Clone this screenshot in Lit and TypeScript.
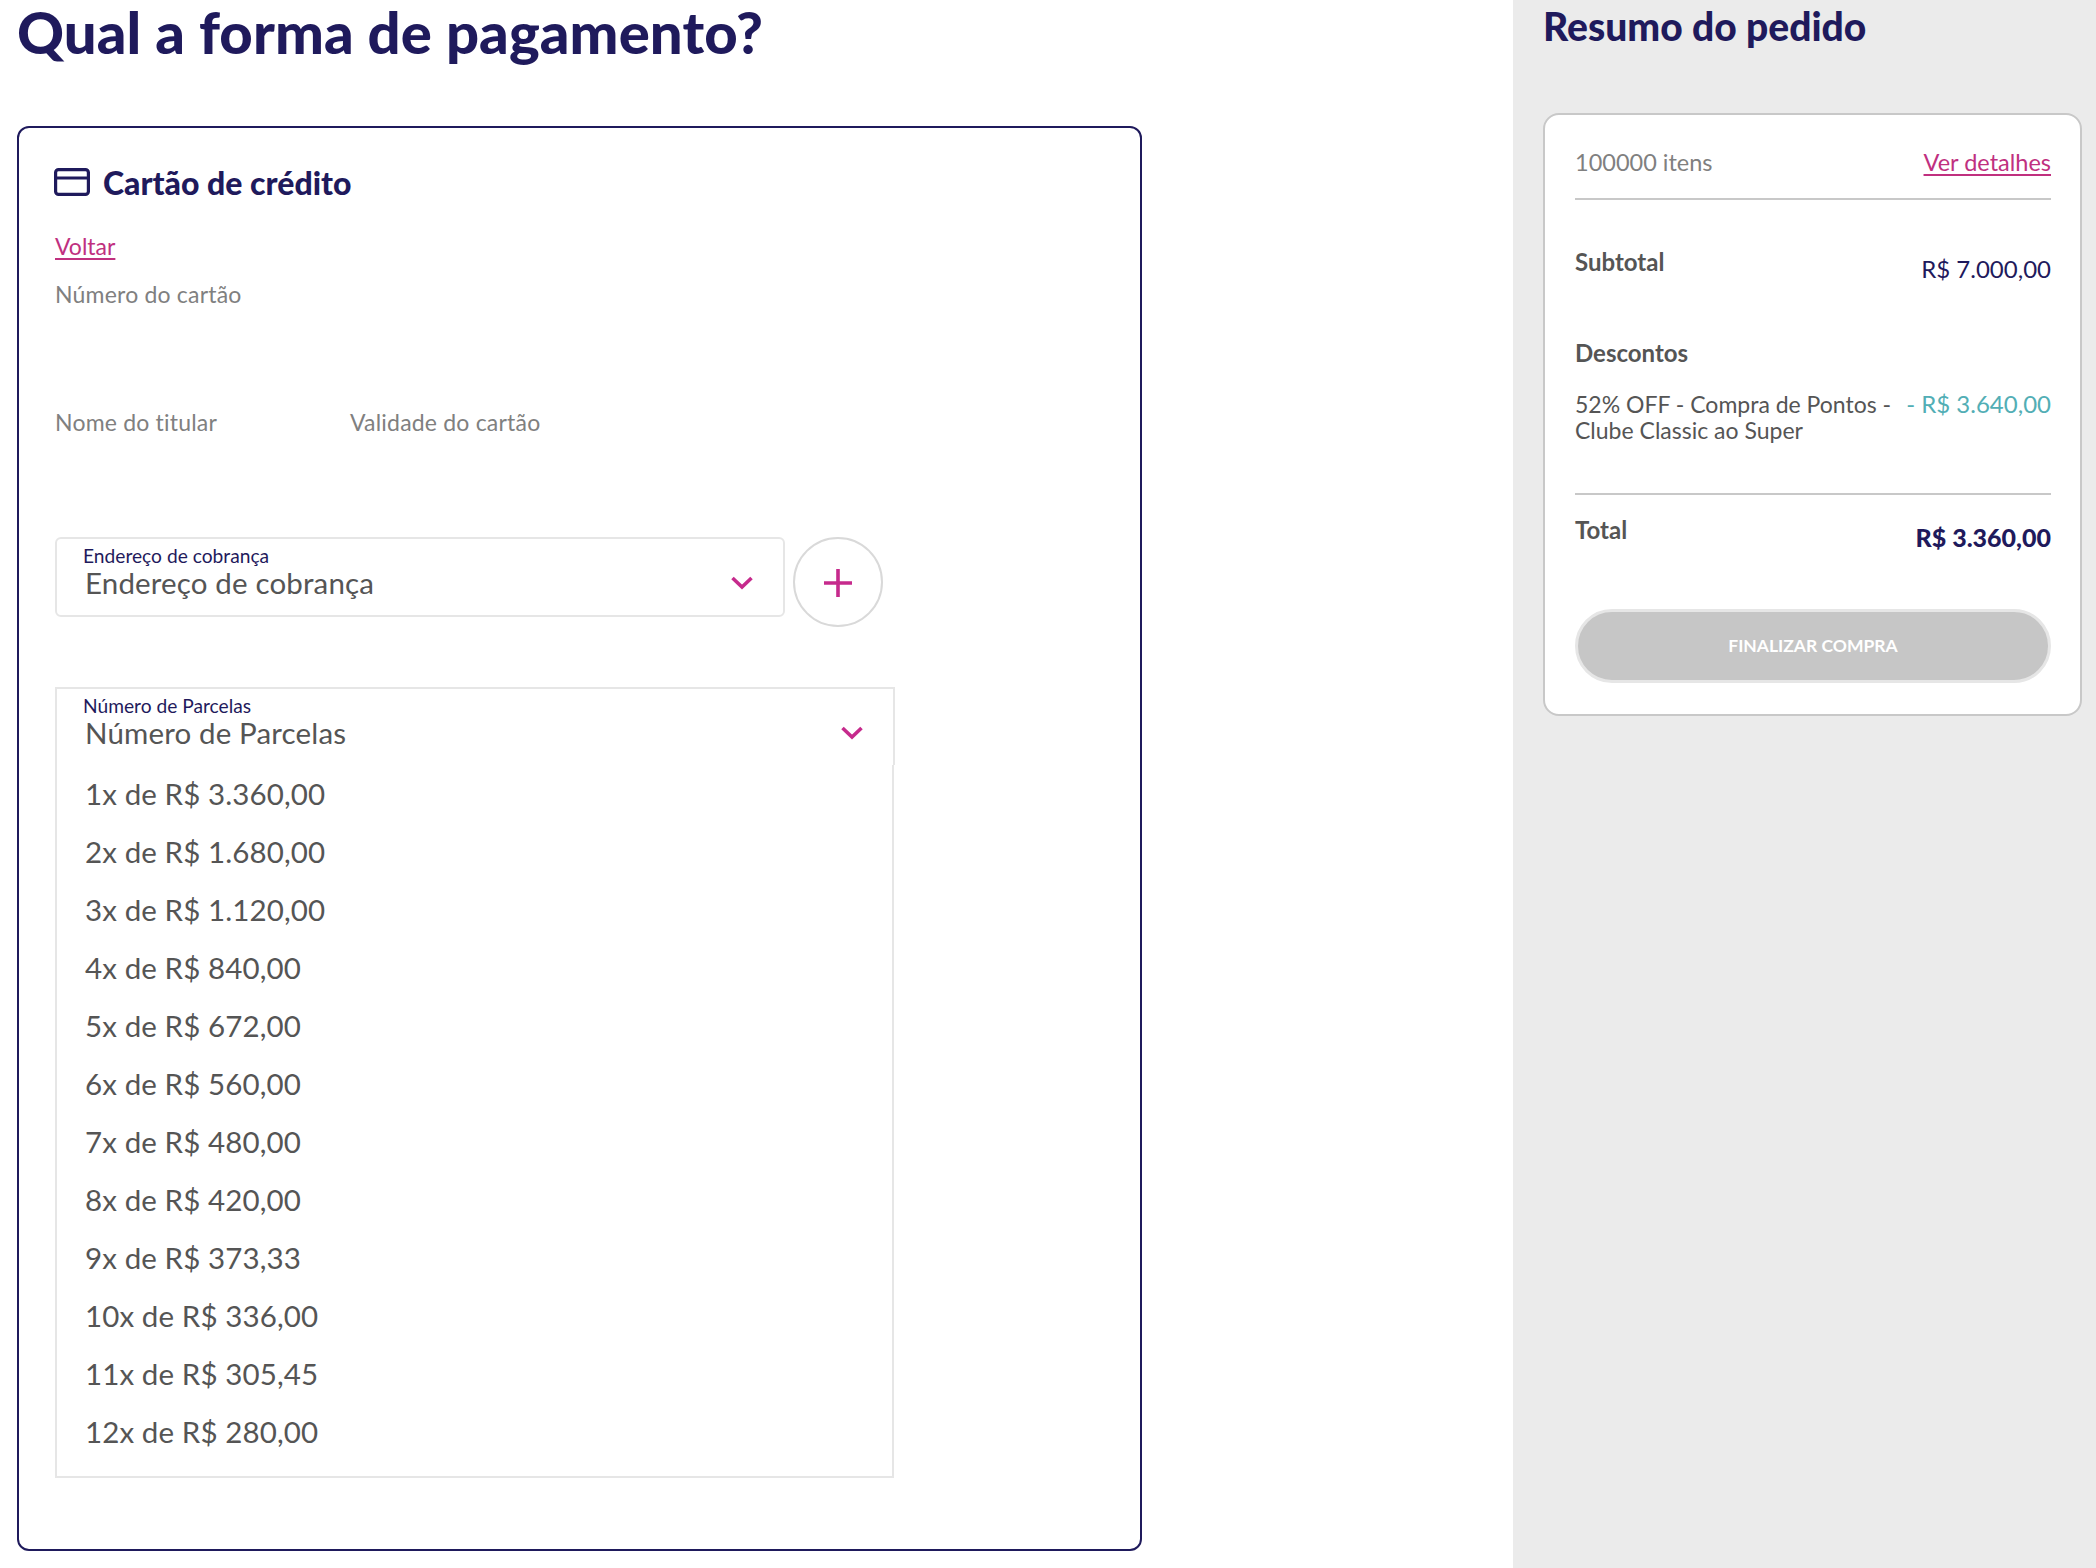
import { html, css, LitElement } from "lit";
import { customElement } from "lit/decorators.js";

const PARCELAS = [
  "1x de R$ 3.360,00",
  "2x de R$ 1.680,00",
  "3x de R$ 1.120,00",
  "4x de R$ 840,00",
  "5x de R$ 672,00",
  "6x de R$ 560,00",
  "7x de R$ 480,00",
  "8x de R$ 420,00",
  "9x de R$ 373,33",
  "10x de R$ 336,00",
  "11x de R$ 305,45",
  "12x de R$ 280,00",
];

const chevron = html`<svg class="chevron" viewBox="0 0 22 14" fill="none" stroke="#c62a8c" stroke-width="3.6">
  <path d="M1.5 2 L11 11 L20.5 2" />
</svg>`;

@customElement("app-root")
export class AppRoot extends LitElement {
  static override styles = css`
    :host {
      display: flex;
      width: 2096px;
      height: 1568px;
      overflow: hidden;
      background: #fff;
      font-family: "Lato", "Open Sans", sans-serif;
      color: #555;
    }
    main {
      flex: 1;
      padding-left: 17px;
    }
    h1 {
      margin: 0;
      height: 126px;
      font-size: 58px;
      line-height: 63px;
      letter-spacing: 0.1px;
      font-weight: 900;
      color: #1f1a5c;
    }
    .pay-card {
      box-sizing: border-box;
      width: 1125px;
      height: 1425px;
      border: 2px solid #1f1a5c;
      border-radius: 12px;
      padding: 38px 36px 0;
    }
    .pay-head {
      display: flex;
      align-items: center;
      gap: 13px;
      height: 32px;
      font-size: 32px;
      font-weight: 900;
      color: #1f1a5c;
    }
    .pay-head svg {
      width: 36px;
      height: 28px;
      margin-left: -1px;
    }
    .link {
      color: #c0307f;
      text-decoration: underline;
      text-underline-offset: 3px;
    }
    .back {
      margin-top: 34px;
      font-size: 23px;
      line-height: 28px;
    }
    .field-label {
      font-size: 23px;
      line-height: 28px;
      letter-spacing: 0.2px;
      color: #808080;
    }
    .number {
      margin-top: 20px;
    }
    .field-row {
      display: flex;
      margin-top: 100px;
    }
    .field-row .field-label:first-child {
      width: 295px;
    }
    .address-row {
      display: flex;
      align-items: flex-start;
      gap: 8px;
      margin-top: 101px;
    }
    .select {
      box-sizing: border-box;
      border: 2px solid #e6e6e6;
      padding: 6px 30px 0 28px;
    }
    .address {
      width: 730px;
      height: 80px;
      border-radius: 6px;
    }
    .select-top {
      display: flex;
      align-items: center;
      justify-content: space-between;
    }
    .mini-label {
      margin-left: -2px;
      font-size: 19.2px;
      line-height: 22px;
      color: #1f1a5c;
    }
    .value {
      font-size: 29.5px;
      line-height: 32px;
      letter-spacing: 0.15px;
      color: #555;
    }
    .chevron {
      width: 22px;
      height: 14px;
      flex: none;
    }
    .add {
      box-sizing: border-box;
      width: 90px;
      height: 90px;
      padding-top: 2px;
      border: 2px solid #d9d9d9;
      border-radius: 50%;
      display: flex;
      align-items: center;
      justify-content: center;
    }
    .add svg {
      width: 28px;
      height: 28px;
    }
    .parcelas {
      width: 840px;
      height: 78px;
      margin-top: 60px;
      border-bottom: none;
    }
    .options {
      box-sizing: border-box;
      list-style: none;
      width: 839px;
      height: 713px;
      margin: 0;
      padding: 0 0 0 28px;
      border: 2px solid #e6e6e6;
      border-top: none;
    }
    .options li {
      height: 58px;
      font-size: 29.5px;
      line-height: 58px;
      letter-spacing: 0.1px;
    }
    aside {
      box-sizing: border-box;
      width: 583px;
      background: #ebebeb;
      padding: 0 14px 0 30px;
    }
    h2 {
      margin: 0;
      height: 113px;
      font-size: 39px;
      line-height: 52px;
      font-weight: 900;
      color: #1f1a5c;
    }
    .summary {
      box-sizing: border-box;
      height: 603px;
      background: #fff;
      border: 2px solid #c8c8c8;
      border-radius: 16px;
      padding: 0 29px 0 30px;
    }
    .row {
      display: flex;
      justify-content: space-between;
    }
    .items {
      align-items: center;
      box-sizing: border-box;
      height: 85px;
      padding-top: 11px;
      border-bottom: 2px solid #c8c8c8;
      font-size: 23.5px;
      color: #808080;
    }
    .subtotal {
      margin-top: 48px;
    }
    .strong {
      font-size: 24px;
      line-height: 28px;
      font-weight: 700;
      color: #555;
    }
    .price {
      margin-top: 7px;
      font-size: 24px;
      line-height: 28px;
      color: #1f1a5c;
    }
    .discounts {
      margin-top: 56px;
    }
    .discount-row {
      margin-top: 24px;
      height: 102px;
      border-bottom: 2px solid #c8c8c8;
      font-size: 23px;
      line-height: 26px;
    }
    .discount-name {
      width: 330px;
    }
    .discount-value {
      font-size: 24px;
      color: #52aeb5;
      white-space: nowrap;
    }
    .total {
      margin-top: 21px;
    }
    .total .price {
      margin-top: 7px;
      font-size: 25px;
      font-weight: 900;
    }
    .buy {
      display: block;
      box-sizing: border-box;
      width: 100%;
      height: 74px;
      margin-top: 58px;
      padding-bottom: 2px;
      border: 3px solid #e6e6e6;
      border-radius: 37px;
      background: #c6c6c6;
      color: #fff;
      font-family: inherit;
      font-size: 17.5px;
      font-weight: 700;
    }
  `;

  override render() {
    return html`
      <main>
        <h1>Qual a forma de pagamento?</h1>
        <section class="pay-card">
          <div class="pay-head">
            <svg viewBox="0 0 36 28" fill="none" stroke="#1f1a5c" stroke-width="3.2">
              <rect x="1.6" y="1.6" width="32.8" height="24.8" rx="3" />
              <path d="M1.6 10 H34.4" />
            </svg>
            Cartão de crédito
          </div>
          <div class="back"><span class="link">Voltar</span></div>
          <div class="field-label number">Número do cartão</div>
          <div class="field-row">
            <div class="field-label">Nome do titular</div>
            <div class="field-label">Validade do cartão</div>
          </div>
          <div class="address-row">
            <div class="select address">
              <div class="mini-label">Endereço de cobrança</div>
              <div class="select-top">
                <span class="value">Endereço de cobrança</span>
                ${chevron}
              </div>
            </div>
            <div class="add">
              <svg viewBox="0 0 28 28" stroke="#c62a8c" stroke-width="3.6">
                <path d="M14 0 V28 M0 14 H28" />
              </svg>
            </div>
          </div>
          <div class="select parcelas">
            <div class="mini-label">Número de Parcelas</div>
            <div class="select-top">
              <span class="value">Número de Parcelas</span>
              ${chevron}
            </div>
          </div>
          <ul class="options">
            ${PARCELAS.map((p) => html`<li>${p}</li>`)}
          </ul>
        </section>
      </main>
      <aside>
        <h2>Resumo do pedido</h2>
        <section class="summary">
          <div class="row items">
            <span>100000 itens</span>
            <span class="link">Ver detalhes</span>
          </div>
          <div class="row subtotal">
            <span class="strong">Subtotal</span>
            <span class="price">R$ 7.000,00</span>
          </div>
          <div class="strong discounts">Descontos</div>
          <div class="row discount-row">
            <span class="discount-name">52% OFF - Compra de Pontos - Clube Classic ao Super</span>
            <span class="discount-value">- R$ 3.640,00</span>
          </div>
          <div class="row total">
            <span class="strong">Total</span>
            <span class="price">R$ 3.360,00</span>
          </div>
          <button class="buy">FINALIZAR COMPRA</button>
        </section>
      </aside>
    `;
  }
}
